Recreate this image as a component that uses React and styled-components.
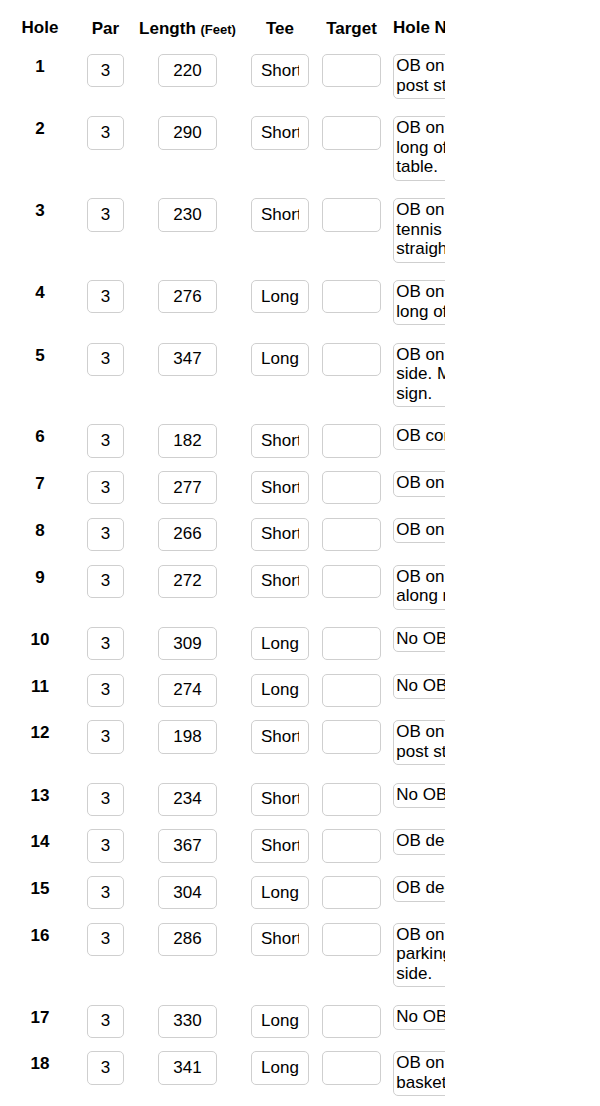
import React from "react"
import styled, { createGlobalStyle } from "styled-components"

const holes = [
    { par: 3, length: 220, tee: "Short", notes: ["OB on left side of the fence", "post stakes."] },
    { par: 3, length: 290, tee: "Short", notes: ["OB on right side and", "long of the picnic", "table."] },
    { par: 3, length: 230, tee: "Short", notes: ["OB on left side of the", "tennis courts. Play it", "straight down the path."] },
    { par: 3, length: 276, tee: "Long", notes: ["OB on road to the right and", "long of the basket."] },
    { par: 3, length: 347, tee: "Long", notes: ["OB on the parking lot left", "side. Mando right of the", "sign."] },
    { par: 3, length: 182, tee: "Short", notes: ["OB concrete path."] },
    { par: 3, length: 277, tee: "Short", notes: ["OB on the road."] },
    { par: 3, length: 266, tee: "Short", notes: ["OB on the path."] },
    { par: 3, length: 272, tee: "Short", notes: ["OB on right side and", "along road."] },
    { par: 3, length: 309, tee: "Long", notes: ["No OB."] },
    { par: 3, length: 274, tee: "Long", notes: ["No OB."] },
    { par: 3, length: 198, tee: "Short", notes: ["OB on left side past the", "post stakes."] },
    { par: 3, length: 234, tee: "Short", notes: ["No OB."] },
    { par: 3, length: 367, tee: "Short", notes: ["OB deep into the trees."] },
    { par: 3, length: 304, tee: "Long", notes: ["OB deep left."] },
    { par: 3, length: 286, tee: "Short", notes: ["OB on the right side of", "parking lot on the left", "side."] },
    { par: 3, length: 330, tee: "Long", notes: ["No OB."] },
    { par: 3, length: 341, tee: "Long", notes: ["OB on the left side past the", "basket."] },
]

const App = () => {
    return (
        <>
            <GlobalStyle />
            <Scroller>
                <HeaderRow>
                    <HeadCell raised>Hole</HeadCell>
                    <HeadCell>Par</HeadCell>
                    <HeadCell>Length <Small>(Feet)</Small></HeadCell>
                    <HeadCell>Tee</HeadCell>
                    <HeadCell>Target</HeadCell>
                    <HeadCell raised left>Hole Notes</HeadCell>
                </HeaderRow>
                {holes.map((hole, i) => (
                    <Row key={i}>
                        <HoleNumber>{i + 1}</HoleNumber>
                        <Cell><Field width={36.3} defaultValue={hole.par} readOnly /></Cell>
                        <Cell><Field defaultValue={hole.length} readOnly /></Cell>
                        <Cell><Field defaultValue={hole.tee} readOnly /></Cell>
                        <Cell><Field defaultValue="" readOnly /></Cell>
                        <NoteCell>
                            <NoteBox>
                                {hole.notes.map((line, j) => <NoteLine key={j}>{line}</NoteLine>)}
                            </NoteBox>
                        </NoteCell>
                    </Row>
                ))}
            </Scroller>
        </>
    )
}

export default App


const GlobalStyle = createGlobalStyle`
    body {
        margin: 0;
        background: #fff;
        color: #000;
        font-family: "Liberation Sans", Arial, sans-serif;
    }
`

const Scroller = styled.div`
    width: 445px;
    overflow: hidden;
`

const Row = styled.div`
    display: grid;
    grid-template-columns: 80px 51px 113px 72px 71px 240px;
    align-items: start;
    padding-bottom: 13.4px;
`

const HeaderRow = styled(Row)`
    height: 54px;
    padding-bottom: 0;
    box-sizing: border-box;
`

const HeadCell = styled.div`
    padding-top: ${props => props.raised ? 17.7 : 19.4}px;
    font-size: 17px;
    font-weight: bold;
    line-height: 20px;
    white-space: nowrap;
    text-align: ${props => props.left ? "left" : "center"};
    padding-left: ${props => props.left ? 6 : 0}px;
`

const Small = styled.span`
    font-size: 13px;
`

const HoleNumber = styled.div`
    padding-top: 3px;
    text-align: center;
    font-size: 17px;
    font-weight: bold;
    line-height: 20px;
`

const Cell = styled.div`
    display: flex;
    justify-content: center;
`

const Field = styled.input`
    box-sizing: border-box;
    width: ${props => props.width || 58.5}px;
    height: 33.3px;
    margin: 0;
    padding: 0 ${props => props.width ? 4 : 9.25}px;
    border: 1px solid #cfcfcf;
    border-radius: 5px;
    background: #fff;
    color: #000;
    font-family: "Liberation Sans", Arial, sans-serif;
    font-size: 17px;
    text-align: center;
    outline: none;
`

const NoteCell = styled.div`
    padding-left: 6.3px;
`

const NoteBox = styled.div`
    width: 230px;
    margin-bottom: 4px;
    padding: 1px 2px 3px;
    border: 1px solid #cfcfcf;
    border-radius: 5px;
    font-size: 17px;
    line-height: 19.5px;
    white-space: nowrap;
    overflow: hidden;
`

const NoteLine = styled.div``
